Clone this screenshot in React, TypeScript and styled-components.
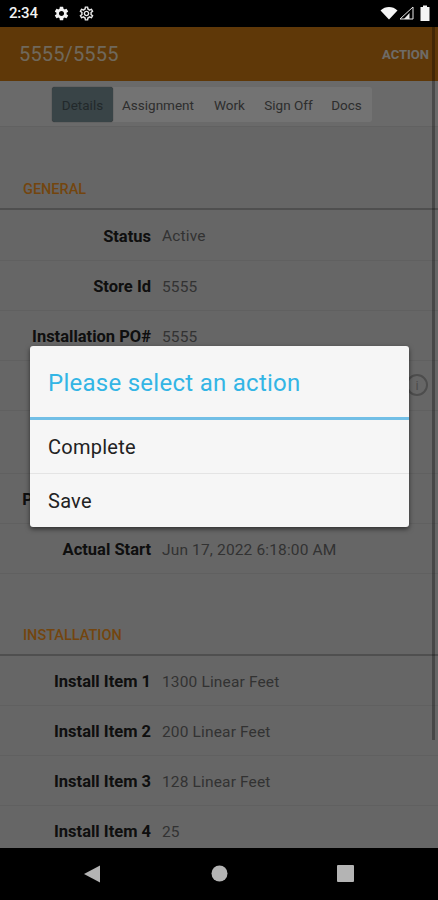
import React from "react";
import styled, { createGlobalStyle } from "styled-components";
import { MdSettings, MdOutlineSettings } from "react-icons/md";

const Global = createGlobalStyle`
  html, body { margin: 0; padding: 0; background: #000; }
  * { box-sizing: border-box; }
`;
const Phone = styled.div`
  width: 438px; height: 900px; display: flex; flex-direction: column;
  font-family: Roboto, "Liberation Sans", sans-serif; overflow: hidden; background: #000;
`;
const StatusBar = styled.div`
  height: 27px; flex: none; background: #000; color: #f2f2f2; display: flex; align-items: center;
  padding: 0 8px 1px 9px; font-size: 15px; font-weight: 500;
`;
const Clock = styled.span`width: 44px; letter-spacing: -0.2px;`;
const LeftIcons = styled.div`display: flex; gap: 8px; align-items: center; flex: 1; svg { display: block; }`;
const RightIcons = styled.div`display: flex; gap: 1px; align-items: center; svg { display: block; }`;
const Screen = styled.div`flex: 1; position: relative; overflow: hidden; background: #e3e3e3; display: flex; flex-direction: column;`;
const AppBar = styled.div`
  height: 54px; flex: none; background: #d37c12; display: flex; align-items: center; justify-content: space-between;
  padding: 0 9px 0 19px; color: #fff;
`;
const AppTitle = styled.div`font-size: 20px; letter-spacing: 0.15px; color: #f6e6cc;`;
const AppAction = styled.div`font-size: 13px; font-weight: 700; color: #f4eee4;`;
const TabBar = styled.div`
  height: 46px; flex: none; background: #ececec; display: flex; align-items: flex-start; padding: 6px 0 0 52px;
  border-bottom: 1px solid #d8d8d8;
`;
const Segments = styled.div`display: flex; height: 35px; width: 320px; background: #ffffff; border-radius: 3px;`;
const Segment = styled.div<{ $w: number; $active?: boolean }>`
  width: ${p => p.$w}px; display: flex; align-items: center; justify-content: center; font-size: 13.5px; color: #666;
  ${p => p.$active ? "background: #7f979e; border-radius: 3px; box-shadow: 0 0 1px #333; color: #4c5b60;" : ""}
`;
const Content = styled.div`flex: 1; display: flex; flex-direction: column; overflow: hidden; padding-top: 42px;`;
const SectionTitle = styled.div`
  height: 41px; flex: none; padding: 12px 0 0 23px; font-size: 14.5px; line-height: 17px; font-weight: 500; color: #ff9a22;
  border-bottom: 2px solid #b0b0b0;
`;
const Row = styled.div<{ $h?: number }>`
  height: ${p => p.$h ?? 50}px; flex: none; display: flex; align-items: center; position: relative;
  padding-top: 2px; border-bottom: 1px solid #d4d4d4;
`;
const Label = styled.div`
  width: 151px; flex: none; text-align: right; font-size: 16.5px; font-weight: 700; color: #222; white-space: nowrap;
  display: flex; justify-content: flex-end;
`;
const Value = styled.div`margin-left: 11px; font-size: 15.5px; color: #707070; letter-spacing: 0.15px;`;
const Gap = styled.div`height: 41px; flex: none;`;
const Info = styled.div`
  position: absolute; right: 10px; top: 13px; width: 22px; height: 22px; border-radius: 50%; border: 2px solid #aaa;
  display: flex; align-items: center; justify-content: center; font-size: 13px; color: #aaa;
`;
const Scrollbar = styled.div`position: absolute; right: 3px; top: 0; width: 3px; height: 713px; background: rgba(0,0,0,0.3);`;
const Dim = styled.div`position: absolute; inset: 0; background: rgba(0,0,0,0.55);`;
const Dialog = styled.div`
  position: absolute; left: 30px; top: 319px; width: 379px; background: #f6f6f6; border-radius: 3px;
  box-shadow: 0 2px 5px rgba(0,0,0,0.55);
`;
const DialogTitle = styled.div`
  height: 74px; padding: 22px 0 0 18px; font-size: 24px; line-height: 30px; letter-spacing: 0.27px; color: #33b5e5; border-bottom: 3px solid #72bfe6;
`;
const DialogItem = styled.div<{ $last?: boolean }>`
  height: ${p => p.$last ? 53 : 54}px; display: flex; align-items: center; padding-left: 18px; font-size: 20px; letter-spacing: 0.25px; color: #222;
  ${p => p.$last ? "" : "border-bottom: 1px solid #e4e4e4;"}
`;
const NavBar = styled.div`
  height: 52px; flex: none; background: #000; display: flex; align-items: center; justify-content: space-between; padding: 0 84px 1px 83px;
  svg { display: block; }
`;

const general = [
  { l: "Status", v: "Active", h: 51 },
  { l: "Store Id", v: "5555" },
  { l: "Installation PO#", v: "5555" },
  { l: "", v: "", h: 50, info: true },
  { l: "", v: "", h: 63 },
  { l: "Project Complete", v: "" },
  { l: "Actual Start", v: "Jun 17, 2022 6:18:00 AM" },
];
const install = [
  { l: "Install Item 1", v: "1300 Linear Feet" },
  { l: "Install Item 2", v: "200 Linear Feet" },
  { l: "Install Item 3", v: "128 Linear Feet" },
  { l: "Install Item 4", v: "25" },
];
const tabs = [
  { t: "Details", w: 61, a: true }, { t: "Assignment", w: 90 }, { t: "Work", w: 53 }, { t: "Sign Off", w: 65 }, { t: "Docs", w: 51 },
];

export default function App() {
  return (
    <Phone>
      <Global />
      <StatusBar>
        <Clock>2:34</Clock>
        <LeftIcons>
          <MdSettings size={17} color="#f2f2f2" />
          <MdOutlineSettings size={17} color="#e8e8e8" />
        </LeftIcons>
        <RightIcons>
          <svg width="18" height="14" viewBox="0 0 18 14"><path d="M0.5 4.5C3 2 6 1 9 1s6 1 8.5 3.5L9 13.5z" fill="#f5f5f5" /></svg>
          <svg width="15" height="14" viewBox="0 0 15 14"><path d="M1 13L14 1v12z" fill="none" stroke="#e8e8e8" strokeWidth="1" /><path d="M5 13L10.5 7V13z" fill="#e8e8e8" /></svg>
          <svg width="10" height="16" viewBox="1 0 10 16" style={{ marginLeft: 5 }}><path d="M4 0.5h4v1.5h2.5v14H1.5V2H4z" fill="#f5f5f5" /></svg>
        </RightIcons>
      </StatusBar>
      <Screen>
        <AppBar>
          <AppTitle>5555/5555</AppTitle>
          <AppAction>ACTION</AppAction>
        </AppBar>
        <TabBar>
          <Segments>
            {tabs.map(t => <Segment key={t.t} $w={t.w} $active={t.a}>{t.t}</Segment>)}
          </Segments>
        </TabBar>
        <Content>
          <SectionTitle>GENERAL</SectionTitle>
          {general.map((r, i) => (
            <Row key={i} $h={r.h}>
              <Label>{r.l}</Label>
              <Value>{r.v}</Value>
              {r.info && <Info>i</Info>}
            </Row>
          ))}
          <Gap />
          <SectionTitle>INSTALLATION</SectionTitle>
          {install.map(r => (
            <Row key={r.l}>
              <Label>{r.l}</Label>
              <Value>{r.v}</Value>
            </Row>
          ))}
        </Content>
        <Scrollbar />
        <Dim />
        <Dialog>
          <DialogTitle>Please select an action</DialogTitle>
          <DialogItem>Complete</DialogItem>
          <DialogItem $last>Save</DialogItem>
        </Dialog>
      </Screen>
      <NavBar>
        <svg width="18" height="18" viewBox="0 0 18 18"><path d="M17 0.5V17.5L1 9z" fill="#b4b4b4" /></svg>
        <svg width="17" height="17" viewBox="0 0 17 17"><circle cx="8.5" cy="8.5" r="8" fill="#b4b4b4" /></svg>
        <svg width="17" height="17" viewBox="0 0 17 17"><rect x="0" y="0" width="17" height="17" rx="1" fill="#b4b4b4" /></svg>
      </NavBar>
    </Phone>
  );
}
